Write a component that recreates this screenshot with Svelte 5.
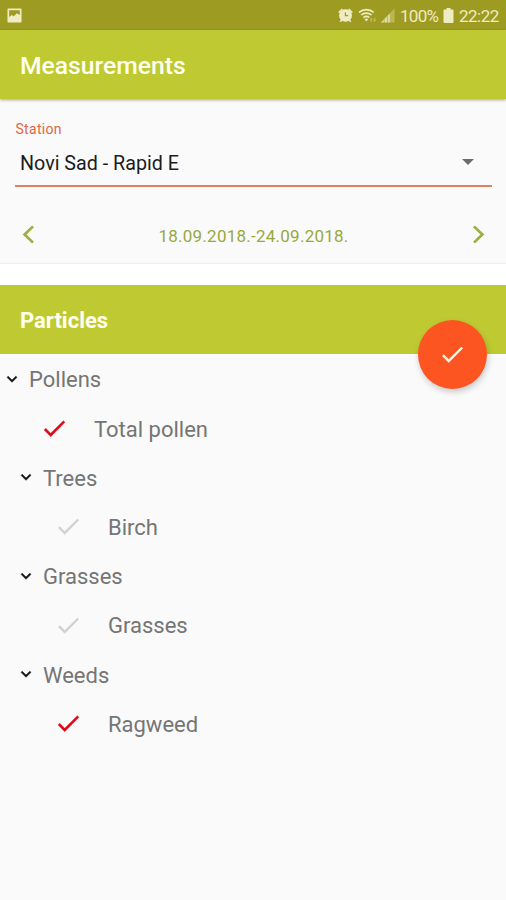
<script lang="ts">
  interface Row {
    label: string;
    depth: number;
    group?: boolean;
    checked?: boolean;
  }

  let rows = $state<Row[]>([
    { label: 'Pollens', depth: 0, group: true },
    { label: 'Total pollen', depth: 1, checked: true },
    { label: 'Trees', depth: 1, group: true },
    { label: 'Birch', depth: 2, checked: false },
    { label: 'Grasses', depth: 1, group: true },
    { label: 'Grasses', depth: 2, checked: false },
    { label: 'Weeds', depth: 1, group: true },
    { label: 'Ragweed', depth: 2, checked: true },
  ]);

  let station = $state('Novi Sad - Rapid E');
  let range = $state('18.09.2018.-24.09.2018.');

  function toggle(row: Row) {
    if (!row.group) row.checked = !row.checked;
  }
</script>

{#snippet check()}
  <svg class="check" viewBox="0 0 24 24">
    <path d="M9 16.17 4.83 12l-1.42 1.41L9 19 21 7l-1.41-1.41z" />
  </svg>
{/snippet}

<div class="screen">
  <div class="status">
    <svg class="picture" viewBox="0 0 16 16">
      <path fill-rule="evenodd" d="M1.5 0.5h13a1 1 0 0 1 1 1v13a1 1 0 0 1-1 1h-13a1 1 0 0 1-1-1v-13a1 1 0 0 1 1-1zM2.3 2.3v7.200l2.700-2 2.200 1.300L10.500 5.500l3.200 2V2.300z" />
    </svg>
    <div class="indicators">
      <svg class="alarm" viewBox="0 0 16 16">
        <path fill-rule="evenodd" d="M8 1.200a6.800 6.800 0 0 1 5 11.400l1.300 1.600-1.300 1-1.500-1.500a6.800 6.800 0 0 1-7 0L3 15.200l-1.300-1L3 12.600A6.800 6.800 0 0 1 8 1.200zM7.200 4.800v4h3.700V7.400H8.600V4.800z" />
        <path d="M.2 4.300 4 .4l1.200 1.200L1.400 5.500zM15.800 4.300 12 .4l-1.200 1.200 3.800 3.900z" />
      </svg>
      <svg class="wifi" viewBox="0 0 20 16">
        <g fill="none" stroke="currentColor" stroke-width="1.700">
          <path d="M1 5.200a12 12 0 0 1 15.600 0" />
          <path d="M3.300 8a8.500 8.500 0 0 1 11 0" />
          <path d="M5.700 10.700a5 5 0 0 1 6.200 0" />
        </g>
        <path d="m6.900 12.400 1.900 2.500 1.900-2.500a3 3 0 0 0-3.800 0z" />
        <path opacity=".35" d="M14 10.500 16 13h-1.200v2.500h-1.600V13H12zM17.500 15.500l-2-2.500h1.200v-2.500h1.600V13h1.200z" />
      </svg>
      <svg class="signal" viewBox="0 0 16 16">
        <path opacity=".35" d="M15.500 .5v15H.5z" />
        <path opacity=".7" d="M1 15.500 4 12.500v3zM5 11.500l2.500-2.500v6.500H5zM8.500 8 10.500 6v9.500h-2z" />
      </svg>
      <span class="percent">100%</span>
      <svg class="battery" viewBox="0 0 11 15">
        <path d="M3.500 0h4v1.500H9.500a1 1 0 0 1 1 1V14a1 1 0 0 1-1 1h-8a1 1 0 0 1-1-1V2.500a1 1 0 0 1 1-1h2z" />
      </svg>
      <span class="clock">22:22</span>
    </div>
  </div>

  <header class="appbar"><h1>Measurements</h1></header>

  <section class="filters">
    <div class="station">
      <span class="caption">Station</span>
      <div class="select">
        <span>{station}</span>
        <svg viewBox="0 0 12 6"><path d="M0 0h12L6 6z" /></svg>
      </div>
    </div>

    <div class="range">
      <button aria-label="Previous week">
        <svg viewBox="0 0 12 18"><path d="M10.300 1.300 2.300 9l8 7.700" /></svg>
      </button>
      <span>{range}</span>
      <button aria-label="Next week">
        <svg viewBox="0 0 12 18"><path d="m1.700 1.300 8 7.700-8 7.700" /></svg>
      </button>
    </div>
  </section>

  <div class="gap"></div>

  <header class="panel-bar">
    <h2>Particles</h2>
    <button class="fab" aria-label="Apply">{@render check()}</button>
  </header>

  <ul class="tree">
    {#each rows as row}
      <li class="depth-{row.depth}">
        <button class="row" class:group={row.group} class:on={row.checked} onclick={() => toggle(row)}>
          {#if row.group}
            <svg class="caret" viewBox="0 0 24 24"><path d="M16.590 8.590 12 13.170 7.410 8.590 6 10l6 6 6-6z" /></svg>
          {:else}
            {@render check()}
          {/if}
          <span>{row.label}</span>
        </button>
      </li>
    {/each}
  </ul>
</div>

<style>
  :global(body) {
    background: #fafafa;
  }

  .screen {
    display: flex;
    flex-direction: column;
    height: 900px;
    overflow: hidden;
    background: #fafafa;
    font-family: Roboto, sans-serif;
  }

  svg {
    display: block;
    flex-shrink: 0;
    fill: currentColor;
  }

  button {
    padding: 0;
    border: 0;
    background: none;
    color: inherit;
    font: inherit;
    cursor: pointer;
  }

  h1, h2 {
    margin: 0;
    color: #fffff0;
    white-space: nowrap;
  }

  /* ── status bar ── */
  .status {
    display: flex;
    align-items: center;
    justify-content: space-between;
    height: 30px;
    flex-shrink: 0;
    box-sizing: border-box;
    padding: 0 7px;
    background: #9e9b22;
    color: #eeecc0;
    font-size: 17px;
  }

  .indicators {
    display: flex;
    align-items: center;
  }

  .indicators span { line-height: 20px; padding-top: 2px; }

  .picture { width: 15px; height: 15px; }
  .alarm { width: 15px; height: 15px; margin-right: 5px; }
  .wifi { width: 19px; height: 16px; margin-right: 3px; }
  .signal { width: 15px; height: 15px; margin-right: 5px; }
  .battery { width: 11px; height: 15px; margin: 0 5px; }
  .percent { width: 38px; letter-spacing: -0.7px; }
  .clock { width: 40px; letter-spacing: -0.5px; }

  /* ── title bars ── */
  .appbar,
  .panel-bar {
    display: flex;
    align-items: center;
    flex-shrink: 0;
    position: relative;
    height: 69px;
    padding-left: 20px;
    background: #bfca32;
  }

  .appbar { box-shadow: 0 1px 3px rgba(0, 0, 0, 0.35); }

  h1 {
    padding-top: 1px;
    font-size: 24.7px;
    font-weight: 500;
  }

  /* ── station and dates ── */
  .filters {
    display: flex;
    flex-direction: column;
    height: 165px;
    flex-shrink: 0;
    box-sizing: border-box;
    border-bottom: 1px solid #f0f0f0;
  }

  .station {
    display: flex;
    flex-direction: column;
    margin: 21px 14px 0 15px;
    height: 65px;
    border-bottom: 2px solid #dc8260;
  }

  .caption {
    padding-left: 0.5px;
    color: #e0663f;
    font-size: 14px;
    line-height: 19px;
    letter-spacing: 0.3px;
  }

  .select {
    display: flex;
    align-items: center;
    justify-content: space-between;
    height: 48px;
    padding: 0 18px 0 5px;
    color: #1c1c1c;
    font-size: 19.7px;
  }

  .select span { padding-top: 2px; }

  .select svg {
    width: 12px;
    height: 6px;
    color: #6c6c6c;
  }

  .range {
    display: flex;
    align-items: center;
    justify-content: space-between;
    margin-top: 25px;
    padding: 0 21px 0 22px;
    height: 44px;
    color: #98a83c;
    font-size: 17px;
  }

  .range span {
    padding-top: 4px;
    letter-spacing: 0.25px;
  }

  .range svg {
    width: 13px;
    height: 19px;
    fill: none;
    stroke: #9bb03f;
    stroke-width: 2.6;
  }

  /* ── particles panel ── */
  .gap {
    height: 21px;
    flex-shrink: 0;
    background: #fff;
  }

  h2 {
    padding-top: 1px;
    font-size: 22px;
    font-weight: 700;
  }

  .fab {
    position: absolute;
    right: 19px;
    bottom: -35px;
    display: flex;
    align-items: center;
    justify-content: center;
    width: 69px;
    height: 69px;
    border-radius: 50%;
    background: #fd5522;
    color: #fff5e4;
    box-shadow: 1px 3px 6px rgba(0, 0, 0, 0.2);
  }

  .check {
    width: 28.6px;
    height: 28.6px;
  }

  /* ── tree ── */
  .tree {
    margin: 0;
    padding: 0.4px 0 0 2px;
    list-style: none;
  }

  .tree li { height: 49.2px; }
  .depth-1 { padding-left: 14px; }
  .depth-2 { padding-left: 28px; }

  .row {
    display: flex;
    align-items: center;
    gap: 25.4px;
    width: 100%;
    height: 100%;
    padding-left: 24px;
    color: #757575;
    font-size: 22px;
    text-align: left;
  }

  .row span { padding-top: 2px; }

  .row.group {
    gap: 7px;
    padding-left: 0;
  }

  .caret {
    width: 20px;
    height: 20px;
    color: #111;
    stroke: currentColor;
    stroke-width: 0.6;
  }

  .row .check { color: #d2d2d2; }
  .row.on .check {
    color: #dc0a14;
    stroke: currentColor;
    stroke-width: 0.3;
  }
</style>
